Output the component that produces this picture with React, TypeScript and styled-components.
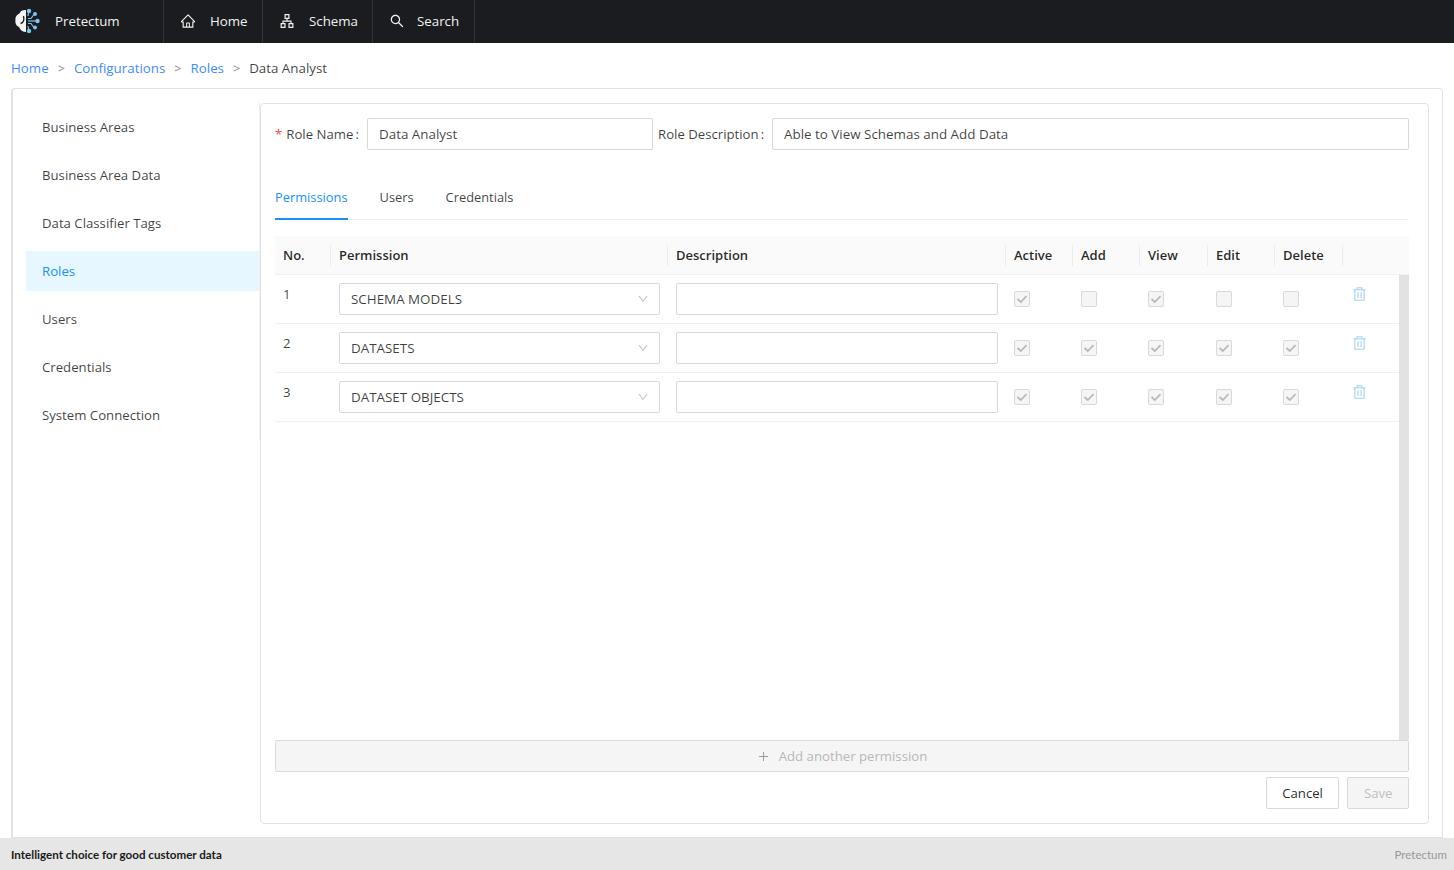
import React from 'react';
import styled, { createGlobalStyle } from 'styled-components';
import {
  AiOutlineApartment,
  AiOutlineDown,
  AiOutlineHome,
  AiOutlinePlus,
  AiOutlineSearch
} from 'react-icons/ai';

const GlobalStyle = createGlobalStyle`
  html, body { margin: 0; padding: 0; height: 100%; overflow: hidden; }
  body {
    font-family: "Open Sans", "Noto Sans", "Liberation Sans", sans-serif;
    font-size: 13.2px;
    color: rgba(0, 0, 0, 0.75);
    background: #fff;
  }
  * { box-sizing: border-box; }
`;

const Page = styled.div`
  height: 870px;
  display: flex;
  flex-direction: column;
`;

const TopBar = styled.header`
  height: 43px;
  flex: none;
  display: flex;
  background: #1b1c1f;
  color: #f2f2f2;
  font-size: 13.3px;
`;

const Brand = styled.div`
  width: 164px;
  display: flex;
  align-items: center;
  padding: 0 0 2px 14px;
  gap: 14px;
  border-right: 1px solid #333438;
`;

const NavItem = styled.div<{ $width: number; $gap?: number }>`
  width: ${p => p.$width}px;
  display: flex;
  align-items: center;
  gap: ${p => p.$gap ?? 14}px;
  padding: 0 0 2px 16px;
  border-right: 1px solid #333438;
  svg { font-size: 16px; flex: none; }
`;

const Crumbs = styled.nav`
  height: 45px;
  flex: none;
  display: flex;
  align-items: center;
  padding: 5px 0 0 11px;
  gap: 9px;
  font-size: 13.35px;
`;

const CrumbLink = styled.span`
  color: #3f8cff;
`;

const CrumbSep = styled.span`
  color: #8c8c8c;
  font-size: 12.5px;
`;

const Card = styled.main`
  flex: 1;
  min-height: 0;
  margin: 0 11px;
  display: flex;
  padding: 14px 13px 13px 13px;
  border: 1px solid #e2e2e2;
  border-left-width: 2px;
  border-radius: 4px 4px 0 0;
`;

const SideMenu = styled.aside`
  width: 234px;
  flex: none;
  align-self: flex-start;
  padding: 4px 0 5px;
  border-right: 1px solid #f0f0f0;
`;

const SideItem = styled.div<{ $active?: boolean }>`
  height: 40px;
  margin-bottom: 8px;
  padding: 0 0 1px 16px;
  display: flex;
  align-items: center;
  background: ${p => (p.$active ? '#e6f7ff' : 'transparent')};
  color: ${p => (p.$active ? '#1890ff' : 'rgba(0, 0, 0, 0.75)')};
  &:last-child { margin-bottom: 0; }
`;

const Panel = styled.section`
  flex: 1;
  min-width: 0;
  display: flex;
  flex-direction: column;
  padding: 14px 19px 14px 14px;
  border: 1px solid #e2e2e2;
  border-radius: 4px;
`;

const RoleForm = styled.div`
  display: flex;
  align-items: center;
  height: 32px;
  flex: none;
`;

const Label = styled.label<{ $width: number; $inset?: number }>`
  width: ${p => p.$width}px;
  flex: none;
  white-space: nowrap;
  padding-left: ${p => p.$inset ?? 0}px;
`;

const Required = styled.span`
  color: #ff4d4f;
  margin-right: 4px;
`;

const Colon = styled.span`
  margin-left: 2px;
`;

const TextBox = styled.div<{ $grow?: boolean; $width?: number }>`
  height: 32px;
  flex: ${p => (p.$grow ? '1' : 'none')};
  width: ${p => (p.$width ? `${p.$width}px` : 'auto')};
  display: flex;
  align-items: center;
  padding: 0 11px 1px;
  border: 1px solid #d9d9d9;
  border-radius: 2px;
  background: #fff;
  white-space: nowrap;
  font-size: 13.4px;
`;

const Tabs = styled.div`
  flex: none;
  display: flex;
  gap: 32px;
  height: 47px;
  margin-top: 23px;
  border-bottom: 1px solid #f0f0f0;
  font-size: 12.85px;
`;

const Tab = styled.div<{ $active?: boolean }>`
  height: 47px;
  padding-top: 2px;
  display: flex;
  align-items: center;
  color: ${p => (p.$active ? '#1890ff' : 'rgba(0, 0, 0, 0.75)')};
  border-bottom: 2px solid ${p => (p.$active ? '#1890ff' : 'transparent')};
`;

const COLUMNS = '56px 337px 338px 67px 67px 68px 67px 68px 56px';

const TableHead = styled.div`
  flex: none;
  margin-top: 16px;
  height: 39px;
  display: grid;
  grid-template-columns: ${COLUMNS} 10px;
  background: #fafafa;
  border-bottom: 1px solid #f0f0f0;
`;

const HeadCell = styled.div`
  display: flex;
  align-items: center;
  padding: 0 0 1px 8px;
  font-weight: 600;
  font-size: 13px;
  color: rgba(0, 0, 0, 0.85);
  position: relative;
  &::after {
    content: '';
    position: absolute;
    right: 0;
    top: 9px;
    height: 21px;
    width: 1px;
    background: #ececec;
  }
`;

const TableBody = styled.div`
  flex: 1;
  min-height: 0;
  display: flex;
`;

const Rows = styled.div`
  flex: 1;
  min-width: 0;
`;

const ScrollTrack = styled.div`
  width: 10px;
  flex: none;
  background: #e2e2e2;
`;

const Row = styled.div`
  height: 49px;
  display: grid;
  grid-template-columns: ${COLUMNS};
  border-bottom: 1px solid #f0f0f0;
`;

const NumberCell = styled.div`
  padding: 10px 0 0 8px;
`;

const FieldCell = styled.div`
  padding: 8px 8px 0;
`;

const SelectBox = styled(TextBox)`
  justify-content: space-between;
  padding-right: 10px;
  svg { font-size: 12px; color: #bfbfbf; }
`;

const CheckCell = styled.div`
  padding: 16px 0 0 8px;
`;

const CheckBox = styled.span`
  width: 16px;
  height: 16px;
  display: flex;
  align-items: center;
  justify-content: center;
  background: #f5f5f5;
  border: 1px solid #d9d9d9;
  border-radius: 2px;
`;

const TrashCell = styled.div`
  padding: 12px 0 0 10px;
`;

const AddRow = styled.div`
  flex: none;
  height: 32px;
  display: flex;
  align-items: center;
  justify-content: center;
  gap: 9px;
  background: #f5f5f5;
  border: 1px solid #d9d9d9;
  border-radius: 2px;
  color: #b8b8b8;
  svg { font-size: 13px; color: #9c9c9c; }
`;

const Actions = styled.div`
  flex: none;
  display: flex;
  justify-content: flex-end;
  gap: 8px;
  margin-top: 5px;
`;

const Button = styled.button<{ $disabled?: boolean }>`
  height: 32px;
  padding: 0 15.5px 1px;
  font: inherit;
  border: 1px solid #d9d9d9;
  border-radius: 2px;
  background: ${p => (p.$disabled ? '#f5f5f5' : '#fff')};
  color: ${p => (p.$disabled ? '#bfbfbf' : 'rgba(0, 0, 0, 0.85)')};
`;

const Footer = styled.footer`
  height: 32px;
  flex: none;
  display: flex;
  align-items: center;
  justify-content: space-between;
  padding: 0 7px 0 11px;
  background: #e6e6e6;
  font-family: Lato, "Noto Sans", sans-serif;
`;

const Tagline = styled.span`
  color: #1a1a1a;
  font-weight: 700;
  font-size: 11.6px;
`;

const FooterBrand = styled.span`
  color: #999;
  font-size: 11.5px;
`;

const Logo = () => (
  <svg width="27" height="27" viewBox="0 0 27 27">
    <path
      d="M12 3 C8 3 6.5 4 5.5 6.5 C3 7.5 1 10 1.5 13 C0.8 16 2.5 19 5 20 C6 23 9 25 12 25 Z"
      fill="#f4f4f4"
    />
    <path d="M9.5 9 C10.5 13 9.5 16 6.5 16.5" fill="none" stroke="#1b1c1f" strokeWidth="1.3" />
    <g stroke="#7fc4f0" strokeWidth="1.2" fill="none">
      <path d="M14 14 H23" />
      <path d="M14 11.5 L17 11.5 L19.5 8" />
      <path d="M14 16.5 L17 16.5 L19.5 20" />
      <path d="M14 9 L14.8 4" />
      <path d="M14 19 L14.8 24" />
    </g>
    <g fill="#7fc4f0">
      <circle cx="15" cy="4" r="2.2" />
      <circle cx="21" cy="7" r="2" />
      <circle cx="23.5" cy="14" r="2.2" />
      <circle cx="21" cy="20.5" r="2" />
      <circle cx="15" cy="24" r="2.2" />
    </g>
  </svg>
);

const CheckMark = () => (
  <svg width="12" height="12" viewBox="0 0 12 12">
    <path d="M1.5 6 L4.8 9 L10.5 3.2" fill="none" stroke="#b8b8b8" strokeWidth="1.7" />
  </svg>
);

const TrashIcon = () => (
  <svg width="13" height="14" viewBox="0 0 14 15" fill="none" stroke="#a3d3f7" strokeWidth="1.2">
    <path d="M0.5 3 H13.5" />
    <path d="M4.5 3 V0.8 H9.5 V3" />
    <path d="M2 3 V14.2 H12 V3" />
    <path d="M5.3 5.5 V11.8 M8.7 5.5 V11.8" />
  </svg>
);

const rows = [
  { no: 1, name: 'SCHEMA MODELS', checks: [true, false, true, false, false] },
  { no: 2, name: 'DATASETS', checks: [true, true, true, true, true] },
  { no: 3, name: 'DATASET OBJECTS', checks: [true, true, true, true, true] }
];

const menu = [
  'Business Areas',
  'Business Area Data',
  'Data Classifier Tags',
  'Roles',
  'Users',
  'Credentials',
  'System Connection'
];

const headers = ['No.', 'Permission', 'Description', 'Active', 'Add', 'View', 'Edit', 'Delete'];

export default function App() {
  return (
    <Page>
      <GlobalStyle />
      <TopBar>
        <Brand>
          <Logo />
          <span>Pretectum</span>
        </Brand>
        <NavItem $width={99}>
          <AiOutlineHome />
          <span>Home</span>
        </NavItem>
        <NavItem $width={110}>
          <AiOutlineApartment />
          <span>Schema</span>
        </NavItem>
        <NavItem $width={102} $gap={12}>
          <AiOutlineSearch />
          <span>Search</span>
        </NavItem>
      </TopBar>

      <Crumbs>
        <CrumbLink>Home</CrumbLink>
        <CrumbSep>&gt;</CrumbSep>
        <CrumbLink>Configurations</CrumbLink>
        <CrumbSep>&gt;</CrumbSep>
        <CrumbLink>Roles</CrumbLink>
        <CrumbSep>&gt;</CrumbSep>
        <span>Data Analyst</span>
      </Crumbs>

      <Card>
        <SideMenu>
          {menu.map(item => (
            <SideItem key={item} $active={item === 'Roles'}>
              {item}
            </SideItem>
          ))}
        </SideMenu>

        <Panel>
          <RoleForm>
            <Label $width={92}>
              <Required>*</Required>Role Name<Colon>:</Colon>
            </Label>
            <TextBox $width={286}>Data Analyst</TextBox>
            <Label $width={119} $inset={5}>
              Role Description<Colon>:</Colon>
            </Label>
            <TextBox $grow>Able to View Schemas and Add Data</TextBox>
          </RoleForm>

          <Tabs>
            <Tab $active>Permissions</Tab>
            <Tab>Users</Tab>
            <Tab>Credentials</Tab>
          </Tabs>

          <TableHead>
            {headers.map(h => (
              <HeadCell key={h}>{h}</HeadCell>
            ))}
          </TableHead>

          <TableBody>
            <Rows>
              {rows.map(row => (
                <Row key={row.no}>
                  <NumberCell>{row.no}</NumberCell>
                  <FieldCell>
                    <SelectBox>
                      {row.name}
                      <AiOutlineDown />
                    </SelectBox>
                  </FieldCell>
                  <FieldCell>
                    <TextBox />
                  </FieldCell>
                  {row.checks.map((checked, i) => (
                    <CheckCell key={i}>
                      <CheckBox>{checked && <CheckMark />}</CheckBox>
                    </CheckCell>
                  ))}
                  <TrashCell>
                    <TrashIcon />
                  </TrashCell>
                </Row>
              ))}
            </Rows>
            <ScrollTrack />
          </TableBody>

          <AddRow>
            <AiOutlinePlus />
            <span>Add another permission</span>
          </AddRow>

          <Actions>
            <Button>Cancel</Button>
            <Button $disabled>Save</Button>
          </Actions>
        </Panel>
      </Card>

      <Footer>
        <Tagline>Intelligent choice for good customer data</Tagline>
        <FooterBrand>Pretectum</FooterBrand>
      </Footer>
    </Page>
  );
}
